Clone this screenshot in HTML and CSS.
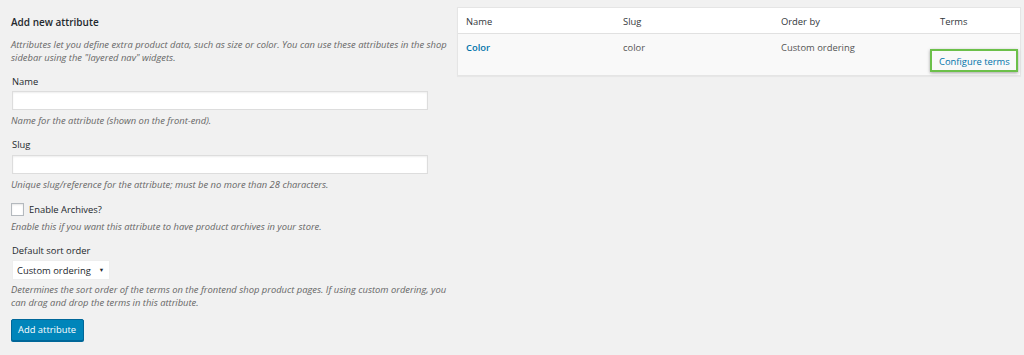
FILE: index.html
```html
<!DOCTYPE html>
<html>
<head>
<meta charset="utf-8">
<link rel="stylesheet" href="styles.css">
</head>
<body>
<div class="wrap">
  <div class="col-left">
    <h2 class="title">Add new attribute</h2>
    <p class="desc intro">Attributes let you define extra product data, such as size or color. You can use these attributes in the shop sidebar using the "layered nav" widgets.</p>

    <div class="field f-name">
      <label class="label">Name</label>
      <div class="input"></div>
      <p class="desc help">Name for the attribute (shown on the front-end).</p>
    </div>

    <div class="field f-slug">
      <label class="label">Slug</label>
      <div class="input"></div>
      <p class="desc help">Unique slug/reference for the attribute; must be no more than 28 characters.</p>
    </div>

    <div class="field f-arch">
      <div class="check-row"><span class="checkbox"></span><span class="check-label">Enable Archives?</span></div>
      <p class="desc help">Enable this if you want this attribute to have product archives in your store.</p>
    </div>

    <div class="field f-sort">
      <label class="label">Default sort order</label>
      <div class="select"><span>Custom ordering</span><span class="arrow">▼</span></div>
      <p class="desc help">Determines the sort order of the terms on the frontend shop product pages. If using custom ordering, you can drag and drop the terms in this attribute.</p>
    </div>

    <div class="button">Add attribute</div>
  </div>

  <div class="col-right">
    <div class="table">
      <div class="row head">
        <div class="cell">Name</div>
        <div class="cell">Slug</div>
        <div class="cell">Order by</div>
        <div class="cell">Terms</div>
      </div>
      <div class="row body">
        <div class="cell"><a class="name-link">Color</a></div>
        <div class="cell muted">color</div>
        <div class="cell muted">Custom ordering</div>
        <div class="cell terms"><a class="configure">Configure terms</a></div>
      </div>
    </div>
  </div>
</div>
</body>
</html>
```

FILE: styles.css
```css
html, body {
  margin: 0;
  padding: 0;
  background: #f1f1f1;
}
body {
  font-family: "Open Sans", "Liberation Sans", sans-serif;
  font-size: 9.4px;
  color: #23282d;
  width: 1024px;
  height: 355px;
  overflow: hidden;
}
.wrap {
  display: flex;
  padding: 7px 3px 0 12px;
}
.col-left {
  width: 416px;
  padding-top: 8px;
}
.col-right {
  flex: 1;
  margin-left: 29px;
}
.title {
  margin: 0;
  font-size: 10px;
  font-weight: 600;
  line-height: 14px;
  color: #23282d;
  margin-left: -1px;
}
.desc {
  margin: 0;
  font-style: italic;
  color: #666;
  line-height: 13px;
  font-size: 9.4px;
  width: 440px;
}
.intro {
  margin-top: 9px;
  margin-left: -1px;
}
.label {
  display: block;
  line-height: 14px;
  color: #23282d;
}
.input {
  background: #fff;
  border: 1px solid #ddd;
  box-shadow: inset 0 1px 2px rgba(0,0,0,0.07);
  height: 17px;
  margin-top: 2px;
}
.help {
  margin-top: 4px;
  margin-left: -1px;
}
.f-name { margin-top: 11px; }
.f-slug { margin-top: 11px; }
.f-slug .input { margin-top: 3px; }
.f-arch { margin-top: 12px; }
.check-row {
  display: flex;
  align-items: center;
  height: 12px;
}
.checkbox {
  width: 11px;
  height: 11px;
  border: 1px solid #b4b9be;
  background: #fff;
  box-shadow: inset 0 1px 2px rgba(0,0,0,0.1);
  margin-left: -1px;
}
.check-label {
  margin-left: 5px;
}
.f-arch .help { margin-top: 5px; }
.f-sort { margin-top: 11px; }
.select {
  display: inline-flex;
  align-items: center;
  background: #fff;
  border: 1px solid #eee;
  height: 20px;
  box-sizing: border-box;
  padding: 0 5px 0 4px;
  margin-top: 2px;
}
.select .arrow {
  font-size: 5.5px;
  margin-left: 8px;
}
.f-sort .help { margin-top: 3px; }
.button {
  display: inline-block;
  margin-top: 10px;
  margin-left: -1px;
  background: #0085ba;
  border: 1px solid #006799;
  border-radius: 2px;
  box-shadow: 0 1px 0 #006799;
  color: #fff;
  line-height: 20px;
  padding: 0 7px 0 6px;
}
.table {
  background: #fff;
  border: 1px solid #e5e5e5;
  box-shadow: 0 1px 1px rgba(0,0,0,0.04);
}
.row {
  display: grid;
  grid-template-columns: 157px 158px 159px 1fr;
}
.head {
  height: 25px;
  align-items: center;
  border-bottom: 1px solid #e1e1e1;
}
.head .cell {
  padding-left: 8px;
  padding-top: 1px;
  color: #32373c;
}
.body {
  background: #f9f9f9;
  height: 41px;
}
.body .cell {
  padding: 7px 0 0 8px;
  line-height: 13px;
}
.muted { color: #555; }
.name-link {
  color: #0073aa;
  font-weight: 600;
}
.configure {
  display: inline-block;
  margin: 8px 0 0 -10px;
  border: 2px solid #6cc04a;
  box-shadow: 0 1px 3px rgba(0,0,0,0.35);
  padding: 4px 6px 2px 7px;
  color: #0073aa;
  line-height: 13px;
  white-space: nowrap;
}
```
